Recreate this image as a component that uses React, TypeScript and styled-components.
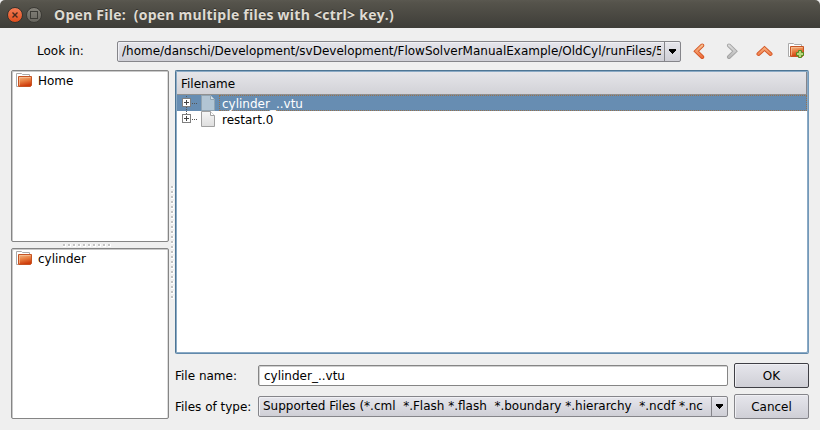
import React from "react";
import styled, { createGlobalStyle } from "styled-components";

const GlobalStyle = createGlobalStyle`
  * { box-sizing: border-box; }
  body { margin: 0; background: #efefef; }
`;

const Dialog = styled.div`
  width: 820px;
  height: 430px;
  display: flex;
  flex-direction: column;
  overflow: hidden;
  background: #efefef;
  color: #000;
  font: 12px/16px "DejaVu Sans", sans-serif;
`;

const TitleBar = styled.header`
  height: 28px;
  flex: none;
  display: flex;
  align-items: center;
  padding: 1px 8px 0 7px;
  background: linear-gradient(#5a5850 0, #55534b 3px, #3e3d38 100%);
  border-radius: 5px 5px 0 0;
`;

const WindowButton = styled.button<{ $close?: boolean }>`
  width: 16px;
  height: 16px;
  margin-right: 3px;
  padding: 0;
  display: grid;
  place-items: center;
  border: 1px solid ${(p) => (p.$close ? "#35332e" : "#3b3a35")};
  border-radius: 50%;
  background: ${(p) =>
    p.$close ? "linear-gradient(#f37c55, #e04e1d)" : "linear-gradient(#85837b, #67655e)"};
`;

const Title = styled.h1`
  margin: 0 0 0 9px;
  color: #dfdbd2;
  font: bold 14px/20px "Open Sans", sans-serif;
  letter-spacing: 0.24px;
  white-space: pre;
  text-shadow: 0 -1px #33322e;
`;

const Toolbar = styled.div`
  height: 42px;
  flex: none;
  display: flex;
  align-items: center;
  padding: 4px 16px 0 37px;
`;

const LookLabel = styled.label`
  width: 80px;
`;

const ComboBox = styled.div<{ $width: number }>`
  width: ${(p) => p.$width}px;
  height: 21px;
  display: flex;
  border: 1px solid #85858a;
  border-radius: 2px;
  background: linear-gradient(#e6e6ec, #cfcfd6);
  box-shadow: inset 1px 1px #f0f0f4;
`;

const ComboText = styled.span`
  flex: 1;
  min-width: 0;
  margin: 1px 3px 0 4px;
  line-height: 17px;
  overflow: hidden;
  white-space: pre;
`;

const ComboArrow = styled.span`
  width: 16px;
  display: grid;
  place-items: center;
  border-left: 1px solid #85858a;
`;

const ToolIcons = styled.nav`
  flex: 1;
  display: flex;
  justify-content: space-between;
  padding-left: 10px;
  svg { display: block; }
`;

const Content = styled.main`
  flex: 1;
  min-height: 0;
  display: flex;
  padding: 0 11px 11px;
`;

const Sidebar = styled.aside`
  width: 158px;
  display: flex;
  flex-direction: column;
`;

const PlacesList = styled.ul<{ $height: number }>`
  height: ${(p) => p.$height}px;
  margin: 0;
  padding: 2px 4px;
  list-style: none;
  background: #fff;
  border: 1px solid #858585;
  border-radius: 2px;
  box-shadow: inset 1px 1px #c9c9c9, inset -1px 0 #dcdcdc;
`;

const Place = styled.li`
  height: 16px;
  display: flex;
  gap: 6px;
  svg { display: block; flex: none; }
`;

const Handle = styled.div<{ $vertical?: boolean }>`
  flex: none;
  display: flex;
  align-items: center;
  justify-content: center;
  ${(p) => (p.$vertical ? "width: 6px; padding-bottom: 5px;" : "height: 6px; padding-right: 6px;")}
`;

const FilePane = styled.section`
  width: 634px;
  display: flex;
  flex-direction: column;
`;

const Tree = styled.div`
  height: 284px;
  padding: 1px;
  background: #fff;
  border: 1px solid #4d7594;
  border-right-color: #7399b9;
  border-bottom-color: #6189ab;
  border-radius: 2px;
  box-shadow: inset 1px 1px #8baac5, inset -1px -1px #8baac5;
`;

const TreeHeader = styled.div`
  height: 23px;
  padding: 4px 4px 0;
  line-height: 16px;
  background: linear-gradient(#e5e5e9, #d2d2d7);
  border-right: 1px solid #85858a;
  border-bottom: 1px solid #909090;
`;

const TreeRow = styled.div<{ $selected?: boolean }>`
  height: 16px;
  display: flex;
  color: ${(p) => (p.$selected ? "#fff" : "#000")};
  background: ${(p) => (p.$selected ? "#678db2" : "#fff")};
  svg { display: block; flex: none; }
`;

const FileName = styled.span<{ $selected?: boolean }>`
  flex: 1;
  margin-left: 3px;
  padding-left: 2px;
  line-height: 16px;
  border: 1px dotted ${(p) => (p.$selected ? "#98724d" : "transparent")};
`;

const FormRow = styled.div<{ $top: number }>`
  height: 25px;
  margin-top: ${(p) => p.$top}px;
  display: flex;
  align-items: center;
`;

const FieldLabel = styled.label`
  width: 83px;
`;

const TextField = styled.input`
  width: 470px;
  height: 21px;
  padding: 1px 5px 0;
  font: inherit;
  color: #000;
  background: #fff;
  border: 1px solid #858585;
  border-radius: 2px;
  box-shadow: inset 1px 1px #d0d0d0;
  outline: none;
`;

const PushButton = styled.button<{ $primary?: boolean }>`
  width: 75px;
  height: 25px;
  margin-left: 6px;
  padding: 0;
  font: inherit;
  color: #000;
  border: 1px solid ${(p) => (p.$primary ? "#3f3f45" : "#85858a")};
  border-radius: 2px;
  background: linear-gradient(#e6e6ec, #cfcfd6);
  box-shadow: inset 1px 1px #f0f0f4;
`;

const DownArrow = () => (
  <svg width="9" height="5" viewBox="0 0 9 5" shapeRendering="crispEdges">
    <path d="M1 0H8V2H7V3H6V4H5V5H4V4H3V3H2V2H1Z" fill="#000" />
  </svg>
);

const Chevron = ({ dir, gray }: { dir: "left" | "right" | "up"; gray?: boolean }) => {
  const d = {
    left: "M11.2 2.5L5.2 8.2L11.2 14",
    right: "M6 2.5L12 8.2L6 14",
    up: "M2.5 11L8.5 5.5L14.5 11",
  }[dir];
  const id = `chev-${dir}`;
  return (
    <svg width="17" height="17" viewBox="0 0 17 17" fill="none" strokeLinecap="round">
      <defs>
        <linearGradient id={id} gradientUnits="userSpaceOnUse" x1="0" y1="2" x2="0" y2="15">
          <stop stopColor={gray ? "#dcdcdc" : "#f8c291"} />
          <stop offset="1" stopColor={gray ? "#b7b7b7" : "#ed6937"} />
        </linearGradient>
      </defs>
      <path d={d} stroke={gray ? "#a3a3a3" : "#d45625"} strokeWidth="4" />
      <path d={d} stroke={`url(#${id})`} strokeWidth="2.3" />
    </svg>
  );
};

const Folder = ({ add }: { add?: boolean }) => (
  <svg width="16" height="16" viewBox="0 0 16 16">
    <defs>
      <linearGradient id="folder-face" x1="0" y1="0" x2=".3" y2="1">
        <stop stopColor="#f3bd8c" />
        <stop offset=".5" stopColor="#e98143" />
        <stop offset="1" stopColor="#cf3c0b" />
      </linearGradient>
    </defs>
    <path d="M2 13.5H.5V.5H5.5L6.5 1.5H13.5V4" fill="#fff" stroke="#aaa" />
    <path d="M2.5 3.5H15.5V12.5L14.5 13.5H2.5Z" fill="url(#folder-face)" stroke="#c65424" />
    <path d="M3.5 12.5V4.5H14.5" fill="none" stroke="#f5c39b" opacity=".7" />
    {add && (
      <path
        d="M10.5 7.5H13.5V9.5H15.5V12.5H13.5V14.5H10.5V12.5H8.5V9.5H10.5Z"
        fill="#b4d87c"
        stroke="#568a22"
      />
    )}
  </svg>
);

const Branch = ({ first }: { first?: boolean }) => (
  <svg width="23" height="16" viewBox="0 0 23 16" shapeRendering="crispEdges" fill="none">
    <path
      d={first ? "M9.5 1V3M9.5 12V16M15 8.5H21" : "M9.5 0V3M15 8.5H21"}
      stroke="#555"
      strokeDasharray="1 1"
    />
    <rect x="5.5" y="3.5" width="8" height="8" fill="#fff" stroke="#808080" />
    <path d="M7 7.5H12M9.5 5V10" stroke="#444" />
  </svg>
);

const Doc = ({ selected }: { selected?: boolean }) => (
  <svg width="16" height="16" viewBox="0 0 16 16">
    <defs>
      <linearGradient id="paper" x1="0" y1="0" x2="0" y2="1">
        <stop stopColor="#f6f6f6" />
        <stop offset="1" stopColor="#dedede" />
      </linearGradient>
    </defs>
    <path
      d="M1.5.5H10.5L14.5 4.5V15.5H1.5Z"
      fill={selected ? "#b2c5d4" : "url(#paper)"}
      stroke={selected ? "#91a4b2" : "#a0a0a0"}
    />
    <path
      d="M10.5.5V4.5H14.5"
      fill={selected ? "#d5e1e9" : "#fff"}
      stroke={selected ? "#91a4b2" : "#a0a0a0"}
    />
  </svg>
);

const Grip = ({ vertical }: { vertical?: boolean }) => {
  const count = vertical ? 23 : 10;
  const length = count * 5;
  return (
    <svg width={vertical ? 4 : length} height={vertical ? length : 4} shapeRendering="crispEdges">
      {Array.from({ length: count }, (_, i) => {
        const x = vertical ? 1 : i * 5 + 1;
        const y = vertical ? i * 5 + 1 : 1;
        return (
          <g key={i}>
            <rect x={x} y={y} width="3" height="3" fill="#fff" />
            <rect x={x} y={y} width="2" height="2" fill="#c3c3c3" />
          </g>
        );
      })}
    </svg>
  );
};

export default function App() {
  return (
    <>
      <GlobalStyle />
      <Dialog>
        <TitleBar>
          <WindowButton $close aria-label="Close">
            <svg width="8" height="8" viewBox="0 0 8 8">
              <path d="M1.5 1.5L6.5 6.5M6.5 1.5L1.5 6.5" stroke="#472a1f" strokeWidth="1.4" />
            </svg>
          </WindowButton>
          <WindowButton aria-label="Maximize">
            <svg width="8" height="8" viewBox="0 0 8 8">
              <rect x=".5" y=".5" width="7" height="7" fill="none" stroke="#3c3b36" />
            </svg>
          </WindowButton>
          <Title>{"Open File:  (open multiple files with <ctrl> key.)"}</Title>
        </TitleBar>
        <Toolbar>
          <LookLabel>Look in:</LookLabel>
          <ComboBox $width={564}>
            <ComboText>/home/danschi/Development/svDevelopment/FlowSolverManualExample/OldCyl/runFiles/5</ComboText>
            <ComboArrow><DownArrow /></ComboArrow>
          </ComboBox>
          <ToolIcons>
            <Chevron dir="left" />
            <Chevron dir="right" gray />
            <Chevron dir="up" />
            <Folder add />
          </ToolIcons>
        </Toolbar>
        <Content>
          <Sidebar>
            <PlacesList $height={172}>
              <Place><Folder />Home</Place>
            </PlacesList>
            <Handle><Grip /></Handle>
            <PlacesList $height={171}>
              <Place><Folder />cylinder</Place>
            </PlacesList>
          </Sidebar>
          <Handle $vertical><Grip vertical /></Handle>
          <FilePane>
            <Tree>
              <TreeHeader>Filename</TreeHeader>
              <TreeRow $selected>
                <Branch first />
                <Doc selected />
                <FileName $selected>cylinder_..vtu</FileName>
              </TreeRow>
              <TreeRow>
                <Branch />
                <Doc />
                <FileName>restart.0</FileName>
              </TreeRow>
            </Tree>
            <FormRow $top={9}>
              <FieldLabel>File name:</FieldLabel>
              <TextField defaultValue="cylinder_..vtu" />
              <PushButton $primary>OK</PushButton>
            </FormRow>
            <FormRow $top={6}>
              <FieldLabel>Files of type:</FieldLabel>
              <ComboBox $width={470}>
                <ComboText>{"Supported Files (*.cml  *.Flash *.flash  *.boundary *.hierarchy  *.ncdf *.nc"}</ComboText>
                <ComboArrow><DownArrow /></ComboArrow>
              </ComboBox>
              <PushButton>Cancel</PushButton>
            </FormRow>
          </FilePane>
        </Content>
      </Dialog>
    </>
  );
}
